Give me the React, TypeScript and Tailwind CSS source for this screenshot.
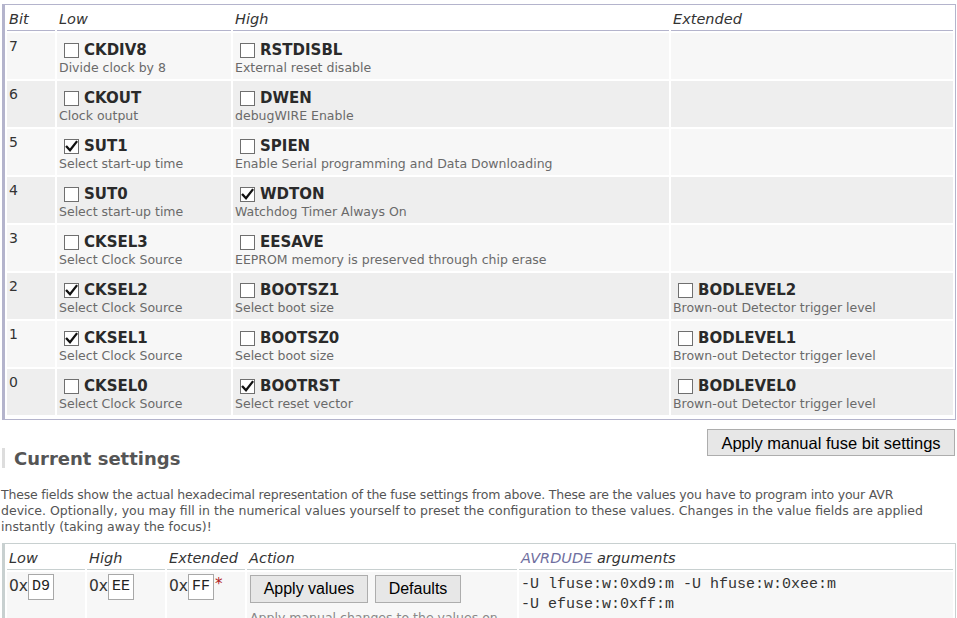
import React from "react";

type Fuse = { name: string; desc: string; checked: boolean } | null;

const rows: { bit: number; low: Fuse; high: Fuse; ext: Fuse }[] = [
  { bit: 7, low: { name: "CKDIV8", desc: "Divide clock by 8", checked: false }, high: { name: "RSTDISBL", desc: "External reset disable", checked: false }, ext: null },
  { bit: 6, low: { name: "CKOUT", desc: "Clock output", checked: false }, high: { name: "DWEN", desc: "debugWIRE Enable", checked: false }, ext: null },
  { bit: 5, low: { name: "SUT1", desc: "Select start-up time", checked: true }, high: { name: "SPIEN", desc: "Enable Serial programming and Data Downloading", checked: false }, ext: null },
  { bit: 4, low: { name: "SUT0", desc: "Select start-up time", checked: false }, high: { name: "WDTON", desc: "Watchdog Timer Always On", checked: true }, ext: null },
  { bit: 3, low: { name: "CKSEL3", desc: "Select Clock Source", checked: false }, high: { name: "EESAVE", desc: "EEPROM memory is preserved through chip erase", checked: false }, ext: null },
  { bit: 2, low: { name: "CKSEL2", desc: "Select Clock Source", checked: true }, high: { name: "BOOTSZ1", desc: "Select boot size", checked: false }, ext: { name: "BODLEVEL2", desc: "Brown-out Detector trigger level", checked: false } },
  { bit: 1, low: { name: "CKSEL1", desc: "Select Clock Source", checked: true }, high: { name: "BOOTSZ0", desc: "Select boot size", checked: false }, ext: { name: "BODLEVEL1", desc: "Brown-out Detector trigger level", checked: false } },
  { bit: 0, low: { name: "CKSEL0", desc: "Select Clock Source", checked: false }, high: { name: "BOOTRST", desc: "Select reset vector", checked: true }, ext: { name: "BODLEVEL0", desc: "Brown-out Detector trigger level", checked: false } },
];

function Check({ checked }: { checked: boolean }) {
  return (
    <span className="inline-flex w-[15px] h-[15px] border border-[#6f6f6f] bg-white items-center justify-center mr-[5px] relative top-[1px] shrink-0">
      {checked && (
        <svg width="13" height="13" viewBox="0 0 13 13">
          <path d="M1.8 6.8 L5 10.2 L11.4 2" fill="none" stroke="#111" strokeWidth="2.3" strokeLinecap="square" />
        </svg>
      )}
    </span>
  );
}

function FuseCell({ f, bg }: { f: Fuse; bg: string }) {
  return (
    <div className={`${bg} h-[46px] pl-[2px] pt-[6px]`}>
      {f && (
        <>
          <div className="flex items-center pl-[5px] h-[21px] text-[15px] font-bold text-[#2a2a2a] leading-[20px]">
            <Check checked={f.checked} />
            <span>{f.name}</span>
          </div>
          <div className="text-[12.5px] leading-[16px] text-[#6a6a6a]">{f.desc}</div>
        </>
      )}
    </div>
  );
}

export default function App() {
  return (
    <div className="h-[618px] overflow-hidden bg-white text-[#333]" style={{ fontFamily: '"DejaVu Sans", Verdana, sans-serif' }}>
      <div className="pt-[4px] pl-[2px] pr-[1px]">
        <div className="border-l-[3px] border-t border-r border-b border-[#b4b4cc] p-[2px] pb-[4px] grid grid-cols-[48px_174px_436px_1fr] gap-[2px]">
          {["Bit", "Low", "High", "Extended"].map((h) => (
            <div key={h} className="h-[24px] border-b border-[#b4b4cc] italic text-[14.5px] leading-[22px] pl-[2px] pt-[1px] text-[#333]">
              {h}
            </div>
          ))}
          {rows.map((r, i) => {
            const bg = i % 2 === 0 ? "bg-[#f7f7f7]" : "bg-[#eeeeee]";
            return (
              <React.Fragment key={r.bit}>
                <div className={`${bg} h-[46px] pl-[2px] pt-[3px] text-[14px] leading-[20px] text-[#333]`}>{r.bit}</div>
                <FuseCell f={r.low} bg={bg} />
                <FuseCell f={r.high} bg={bg} />
                <FuseCell f={r.ext} bg={bg} />
              </React.Fragment>
            );
          })}
        </div>

        <div className="flex justify-end mt-[9px] pr-[1px]">
          <button
            className="h-[27px] w-[248px] border border-[#adadad] bg-[#e7e7e7] text-[16.5px] leading-[20px] text-black"
            style={{ fontFamily: '"Liberation Sans", Arial, sans-serif' }}
          >
            Apply manual fuse bit settings
          </button>
        </div>
      </div>

      <div className="-mt-[8px] ml-[2px] border-l-[3px] border-[#dddddd] pl-[9px] h-[20px] flex items-center">
        <h2 className="text-[18px] font-bold text-[#555] leading-[20px] relative top-[1px]">Current settings</h2>
      </div>

      <p className="mt-[19px] text-[12.5px] leading-[16px] text-[#555] pl-[1px]">
        <span className="tracking-[-0.2px]">
          These fields show the actual hexadecimal representation of the fuse settings from above. These are the values you have to program into your AVR
        </span>
        <br />
        device. Optionally, you may fill in the numerical values yourself to preset the configuration to these values. Changes in the value fields are applied
        <br />
        instantly (taking away the focus)!
      </p>

      <div className="mt-[8px] ml-[2px] mr-[1px] border-l-[3px] border-t border-r border-[#c8d0d0] p-[2px] pb-0 grid grid-cols-[78px_78px_78px_270px_1fr] gap-[2px]">
        {["Low", "High", "Extended", "Action"].map((h) => (
          <div key={h} className="h-[24px] border-b border-[#c8d0d0] italic text-[14.5px] leading-[22px] pl-[2px] pt-[1px] text-[#333]">
            {h}
          </div>
        ))}
        <div className="h-[24px] border-b border-[#c8d0d0] italic text-[14.5px] leading-[22px] pl-[2px] pt-[1px] text-[#333]">
          <span className="text-[#6f6fa0]">AVRDUDE</span> arguments
        </div>

        {[
          { v: "D9", star: false },
          { v: "EE", star: false },
          { v: "FF", star: true },
        ].map((c) => (
          <div key={c.v} className="bg-[#f7f7f7] h-[60px] pl-[2px] pt-[2px] flex items-start">
            <span className="text-[15.5px] leading-[25px] text-[#333]">0x</span>
            <span
              className="inline-block w-[26px] h-[26px] border border-[#a8a8a8] bg-white text-[15px] leading-[24px] pl-[3px] text-[#222]"
              style={{ fontFamily: '"Liberation Mono", "Courier New", monospace' }}
            >
              {c.v}
            </span>
            {c.star && <span className="text-[#b02020] text-[15px] leading-[14px] ml-[1px] mt-[3px]">*</span>}
          </div>
        ))}
        <div className="bg-[#f7f7f7] h-[60px] pl-[3px] pt-[3px]">
          <div className="flex gap-[7px]" style={{ fontFamily: '"Liberation Sans", Arial, sans-serif' }}>
            <button className="h-[28px] w-[118px] border border-[#adadad] bg-[#e7e7e7] text-[16px] leading-[20px] text-black">Apply values</button>
            <button className="h-[28px] w-[86px] border border-[#adadad] bg-[#e7e7e7] text-[16px] leading-[20px] text-black">Defaults</button>
          </div>
          <div className="mt-[7px] text-[12.5px] leading-[16px] text-[#888]">Apply manual changes to the values on</div>
        </div>
        <div
          className="bg-[#f7f7f7] h-[60px] pl-[2px] pt-[3px] text-[15px] leading-[20px] text-[#333]"
          style={{ fontFamily: '"Liberation Mono", "Courier New", monospace' }}
        >
          <div>-U lfuse:w:0xd9:m -U hfuse:w:0xee:m</div>
          <div>-U efuse:w:0xff:m</div>
        </div>
      </div>
    </div>
  );
}
